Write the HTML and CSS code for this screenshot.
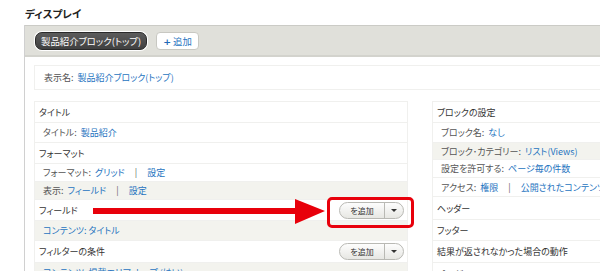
FILE: index.html
```html
<!DOCTYPE html>
<html lang="ja">
<head>
<meta charset="utf-8">
<link rel="stylesheet" href="styles.css">
</head>
<body>
<div class="page">
  <h2 class="page-title">ディスプレイ</h2>
  <div class="panel">
    <div class="tabs">
      <span class="tab-active">製品紹介ブロック(トップ)</span>
      <span class="tab-add"><span class="plus">+</span>追加</span>
    </div>
    <div class="content">
      <div class="name-box"><span class="label">表示名:</span><a class="link">製品紹介ブロック(トップ)</a></div>
      <div class="columns">
        <div class="col col-left">
          <div class="row head h21">タイトル</div>
          <div class="row item h20"><span class="label">タイトル:</span><a class="link">製品紹介</a></div>
          <div class="row head h21">フォーマット</div>
          <div class="row item h18"><span class="label">フォーマット:</span><a class="link">グリッド</a><span class="sep">|</span><a class="link">設定</a></div>
          <div class="row item grey h18"><span class="label">表示:</span><a class="link">フィールド</a><span class="sep">|</span><a class="link">設定</a></div>
          <div class="row head with-btn h21">フィールド
            <span class="dropbtn"><span class="dropbtn-main">を追加</span><span class="dropbtn-arrow"></span></span>
          </div>
          <div class="row item grey h20"><a class="link">コンテンツ: タイトル</a></div>
          <div class="row head with-btn h22">フィルターの条件
            <span class="dropbtn"><span class="dropbtn-main">を追加</span><span class="dropbtn-arrow"></span></span>
          </div>
          <div class="row item grey h20"><a class="link">コンテンツ: 掲載エリア: トップ (はい)</a></div>
        </div>
        <div class="col col-right">
          <div class="row head h21">ブロックの設定</div>
          <div class="row item h20"><span class="label">ブロック名:</span><a class="link">なし</a></div>
          <div class="row item grey h17"><span class="label">ブロック･カテゴリー:</span><a class="link">リスト(Views)</a></div>
          <div class="row item h18"><span class="label">設定を許可する:</span><a class="link">ページ毎の件数</a></div>
          <div class="row item h19"><span class="label">アクセス:</span><a class="link">権限</a><span class="sep">|</span><a class="link">公開されたコンテンツを閲覧</a></div>
          <div class="row head h23">ヘッダー</div>
          <div class="row head h21">フッター</div>
          <div class="row head h22">結果が返されなかった場合の動作</div>
          <div class="row head h21">ページャー</div>
        </div>
      </div>
    </div>
  </div>
  <div class="highlight"></div>
  <svg class="arrow" width="240" height="30" viewBox="0 0 240 30">
    <rect x="0" y="11" width="204" height="6" fill="#e8000b"/>
    <polygon points="202,2 232,14 202,27" fill="#e8000b"/>
  </svg>
</div>
</body>
</html>
```

FILE: styles.css
```css
html, body {
  margin: 0;
  padding: 0;
  background: #fff;
}
* {
  box-sizing: border-box;
}
body {
  font-family: "Noto Sans CJK JP", "Noto Sans", sans-serif;
  font-size: 9px;
  font-feature-settings: "palt";
  color: #444;
  width: 600px;
  height: 271px;
  overflow: hidden;
}
.page {
  position: relative;
  padding-top: 7px;
}
.page-title {
  margin: 0 0 4px 25px;
  font-size: 10.5px;
  font-weight: bold;
  color: #222;
  line-height: 14px;
}
.panel {
  margin-left: 24px;
  border-left: 1px solid #d0d0d0;
}
.tabs {
  height: 32px;
  background: #e0e0da;
  border-top: 1px solid #cbcbc6;
  border-bottom: 2px solid #d3d3cd;
  display: flex;
  align-items: center;
  gap: 9px;
  padding-left: 10px;
}
.tab-active {
  height: 18px;
  line-height: 16px;
  padding: 0 5px;
  background: linear-gradient(#5c5c5c, #404040);
  color: #fff;
  border-radius: 7px;
  border: 1px solid #2a2a2a;
  box-shadow: 0 0 0 1px #fff;
  font-size: 9.4px;
}
.tab-add {
  height: 18px;
  line-height: 16px;
  padding: 0 6px;
  background: #fff;
  color: #2674c0;
  border: 1px solid #c8c8c2;
  border-radius: 4px;
  font-size: 9.4px;
}
.plus {
  font-weight: bold;
  color: #1f6bb8;
  margin-right: 2px;
  font-family: "DejaVu Sans", sans-serif;
}
.content {
  padding: 8px 0 0 9px;
}
.name-box {
  height: 25px;
  line-height: 23px;
  border: 1px solid #f0f0ee;
  border-right: none;
  padding-left: 9px;
}
.label {
  color: #555;
  margin-right: 4px;
}
.link {
  color: #2674c0;
  text-decoration: none;
}
.sep {
  color: #666;
  margin: 0 10px;
}
.columns {
  display: flex;
  gap: 24px;
  margin-top: 11px;
}
.col {
  border: 1px solid #f0f0ee;
  border-bottom: none;
}
.col-left {
  width: 374px;
}
.col-right {
  flex: 1;
  border-right: none;
  overflow: hidden;
}
.row {
  white-space: nowrap;
  overflow: hidden;
  border-bottom: 1px solid #f0f0ee;
  display: flex;
  align-items: center;
}
.head {
  padding-left: 4px;
  color: #333;
}
.item {
  padding-left: 8px;
}
.h17 { height: 17px; }
.h18 { height: 18px; }
.h19 { height: 19px; }
.h20 { height: 20px; }
.h21 { height: 21px; }
.h22 { height: 22px; }
.h23 { height: 23px; }
.grey {
  background: #f3f3ee;
}
.with-btn {
  justify-content: space-between;
  padding-right: 3px;
}
.dropbtn {
  display: flex;
  height: 17px;
  border: 1px solid #b9b9b4;
  border-radius: 9px;
  background: linear-gradient(#fdfdfd, #e7e7e3);
  overflow: hidden;
}
.dropbtn-main {
  width: 45px;
  text-align: center;
  line-height: 15px;
  font-size: 8px;
  color: #333;
  border-right: 1px solid #b9b9b4;
}
.dropbtn-arrow {
  width: 18px;
  position: relative;
}
.dropbtn-arrow::after {
  content: "";
  position: absolute;
  left: 6px;
  top: 6px;
  border-left: 3px solid transparent;
  border-right: 3px solid transparent;
  border-top: 3px solid #333;
}
.highlight {
  position: absolute;
  left: 327px;
  top: 197px;
  width: 87px;
  height: 31px;
  border: 3px solid #e8000b;
  border-radius: 5px;
}
.arrow {
  position: absolute;
  left: 93px;
  top: 197px;
}
```
